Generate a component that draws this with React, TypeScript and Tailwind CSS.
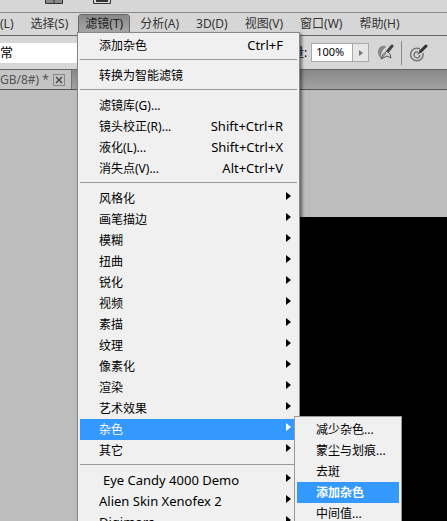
import { useState } from 'react';
import clsx from 'clsx';

type MenuEntry = {
  label: string;
  shortcut?: string;
  submenu?: boolean;
  plugin?: boolean;
  indent?: boolean;
};

const MENUS = ['选择(S)', '滤镜(T)', '分析(A)', '3D(D)', '视图(V)', '窗口(W)', '帮助(H)'];

const FILTER_GROUPS: MenuEntry[][] = [
  [{ label: '添加杂色', shortcut: 'Ctrl+F' }],
  [{ label: '转换为智能滤镜' }],
  [
    { label: '滤镜库(G)...' },
    { label: '镜头校正(R)...', shortcut: 'Shift+Ctrl+R' },
    { label: '液化(L)...', shortcut: 'Shift+Ctrl+X' },
    { label: '消失点(V)...', shortcut: 'Alt+Ctrl+V' },
  ],
  [
    { label: '风格化', submenu: true },
    { label: '画笔描边', submenu: true },
    { label: '模糊', submenu: true },
    { label: '扭曲', submenu: true },
    { label: '锐化', submenu: true },
    { label: '视频', submenu: true },
    { label: '素描', submenu: true },
    { label: '纹理', submenu: true },
    { label: '像素化', submenu: true },
    { label: '渲染', submenu: true },
    { label: '艺术效果', submenu: true },
    { label: '杂色', submenu: true },
    { label: '其它', submenu: true },
  ],
  [
    { label: 'Eye Candy 4000 Demo', submenu: true, plugin: true, indent: true },
    { label: 'Alien Skin Xenofex 2', submenu: true, plugin: true },
    { label: 'Digimarc', submenu: true, plugin: true },
  ],
];

const NOISE_ENTRIES = ['减少杂色...', '蒙尘与划痕...', '去斑', '添加杂色', '中间值...'];

function AirbrushIcon() {
  return (
    <svg width="18" height="17" viewBox="0 0 18 17" fill="none">
      <path d="M8 2C4 1 1 4 1 8c0 3 1 5 3 6 0-5 1-8 5-11Z" fill="#888" />
      <path d="M4 15c1-4 3-6 6-8l3 3 1 4-4-2Z" fill="#d6d6d6" stroke="#555" strokeLinejoin="round" />
      <path d="m9 9-4 5" stroke="#666" />
      <path d="m11 7 4-5" stroke="#444" strokeWidth="3" strokeLinecap="round" />
    </svg>
  );
}

function TabletSizeIcon() {
  return (
    <svg width="19" height="18" viewBox="0 0 19 18" fill="none">
      <path d="M10 5a6.3 6.3 0 1 0 3 4" stroke="#777" strokeWidth="1.5" />
      <path d="M8 8a3 3 0 1 0 2 3" stroke="#666" strokeWidth="1.3" />
      <path d="m7 11 3-5 2 2-5 3Z" fill="#444" />
      <path d="m11 7 5-5" stroke="#333" strokeWidth="3" strokeLinecap="round" />
    </svg>
  );
}

function SubmenuArrow() {
  return (
    <svg width="5" height="8" viewBox="0 0 5 8" className="ml-auto mt-1 self-start" fill="currentColor">
      <path d="M0 0v8l5-4Z" />
    </svg>
  );
}

function ToolbarStrip() {
  return (
    <div className="flex h-3 shrink-0 items-start gap-7 bg-[#d6d6d6] pl-11">
      <svg width="20" height="4" viewBox="0 0 20 4" fill="none">
        <path d="M2 0h16v3H2z" fill="#888" />
        <path d="M1.5 0v3.5h17V0M10 0v3" stroke="#333" />
      </svg>
      <svg width="20" height="4" viewBox="0 0 20 4" fill="none">
        <path d="M4 0h12v2H4z" fill="#333" />
        <path d="M1.5 0v3.5h17V0" stroke="#333" />
      </svg>
    </div>
  );
}

function MenuBar() {
  return (
    <nav className="flex h-6 shrink-0 items-center gap-[5px] border-y border-t-[#888] border-b-[#666] bg-[#d6d6d6] whitespace-nowrap text-[#333]">
      <button className="pr-1.5">(L)</button>
      {MENUS.map((menu) => (
        <button
          key={menu}
          className={clsx(
            'h-[18px] px-1.5',
            menu === '滤镜(T)' && 'rounded-t-xs bg-linear-to-b from-[#888] to-[#aaa] text-[#222] outline outline-[#666]'
          )}
        >
          {menu}
        </button>
      ))}
    </nav>
  );
}

function OptionsBar() {
  return (
    <div className="flex h-[34px] shrink-0 items-center border-b border-[#666] bg-[#d6d6d6]">
      <select aria-label="模式" className="h-5 w-40 appearance-none bg-white text-[13px]">
        <option>常</option>
      </select>
      <label htmlFor="flow" className="ml-[132px]">
        量:
      </label>
      <div className="ml-1 flex h-[19px] border border-[#aaa]">
        <input id="flow" defaultValue="100%" className="w-10 bg-white pl-1 text-[11px]" />
        <button aria-label="流量选项" className="flex w-4 items-center justify-center border-l border-[#aaa] bg-[#e6e6e6]">
          <svg width="4" height="6" viewBox="0 0 4 6" fill="#777">
            <path d="M0 0v6l4-3Z" />
          </svg>
        </button>
      </div>
      <button aria-label="喷枪" className="ml-2">
        <AirbrushIcon />
      </button>
      <div className="ml-1.5 h-6 w-px bg-[#888]" />
      <button aria-label="绘图板压力" className="ml-2">
        <TabletSizeIcon />
      </button>
    </div>
  );
}

function TabBar() {
  return (
    <div className="flex h-5 shrink-0 border-b border-[#555] bg-linear-to-b from-[#888] to-[#a2a2a2]">
      <div className="flex items-center gap-1 border-r border-[#777] bg-[#c4c4c4] pr-1.5 whitespace-nowrap text-[#555]">
        <span>GB/8#) *</span>
        <button aria-label="关闭" className="flex size-3 items-center justify-center border border-[#888]">
          <svg width="8" height="8" viewBox="0 0 8 8" stroke="#444" strokeWidth="1.4">
            <path d="m1 1 6 6M7 1 1 7" />
          </svg>
        </button>
      </div>
    </div>
  );
}

function NoiseMenu() {
  const [active, setActive] = useState('添加杂色');

  return (
    <ul className="absolute -top-[3px] left-[214px] z-10 w-[108px] border border-[#999] bg-[#f0f0f0] p-0.5 text-black">
      {NOISE_ENTRIES.map((label) => (
        <li key={label}>
          <button
            onMouseEnter={() => setActive(label)}
            className={clsx(
              'flex h-[21px] w-full items-center pl-[19px] whitespace-nowrap',
              label === active && 'bg-[#3399ff] font-bold text-white'
            )}
          >
            {label}
          </button>
        </li>
      ))}
    </ul>
  );
}

function FilterMenu() {
  const [open, setOpen] = useState('杂色');

  return (
    <div className="absolute top-8 left-[77px] w-[223px] border border-[#888] bg-[#f0f0f0] p-0.5 shadow-[2px_2px_3px_rgba(0,0,0,0.5)]">
      {FILTER_GROUPS.map((group, i) => (
        <ul key={i} className={clsx(i > 0 && 'mt-[3px] border-t border-[#999] pt-[5px]')}>
          {group.map((entry) => (
            <li key={entry.label} className="relative">
              <button
                onMouseEnter={() => setOpen(entry.label)}
                className={clsx(
                  'flex h-[21px] w-full items-center pr-1.5 pl-[19px] whitespace-nowrap',
                  entry.plugin && 'text-[13px]',
                  entry.label === open && 'bg-[#3399ff] text-white'
                )}
              >
                <span className={clsx(entry.indent && 'pl-1')}>{entry.label}</span>
                {entry.shortcut && <span className="mr-2 ml-auto text-[13px]">{entry.shortcut}</span>}
                {entry.submenu && <SubmenuArrow />}
              </button>
              {entry.label === '杂色' && open === '杂色' && <NoiseMenu />}
            </li>
          ))}
        </ul>
      ))}
    </div>
  );
}

export default function App() {
  return (
    <div className="relative flex h-screen flex-col overflow-hidden bg-[#bdbdbd] font-['Noto_Sans','Noto_Sans_CJK_SC',sans-serif] text-xs text-black">
      <ToolbarStrip />
      <MenuBar />
      <OptionsBar />
      <TabBar />
      <main className="flex flex-1 pt-[127px] pl-48">
        <div className="flex-1 bg-black" />
      </main>
      <FilterMenu />
    </div>
  );
}
